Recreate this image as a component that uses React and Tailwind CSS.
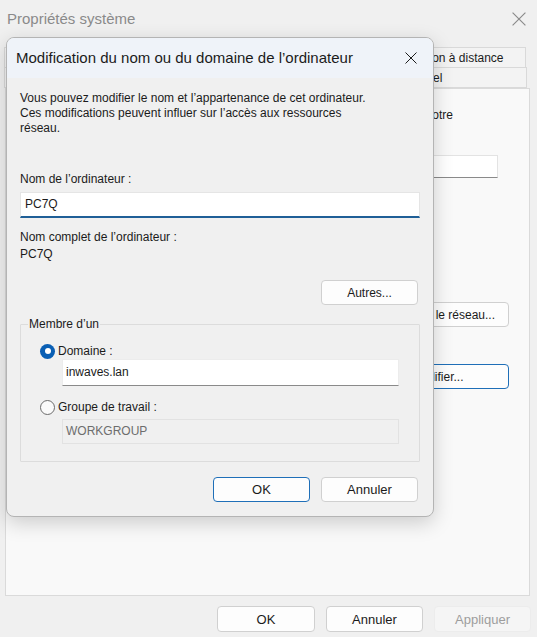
import React from 'react';
import clsx from 'clsx';

/* ─── helpers ─────────────────────────────────────────────── */
const UI = { fontFamily: '"Segoe UI", "Liberation Sans", Arial, sans-serif' };

const CloseGlyph = ({ size = 12, color = '#1b1b1b' }) => (
  <svg width={size} height={size} viewBox="0 0 12 12" fill="none">
    <path d="M0.5 0.5 L11.5 11.5 M11.5 0.5 L0.5 11.5" stroke={color} strokeWidth="1" />
  </svg>
);

const Button = ({ children, primary, disabled, className }) => (
  <div
    className={clsx(
      'flex items-center justify-center rounded-[4px] border text-[12px] leading-none whitespace-nowrap',
      primary && 'border-[#1f6fb8] bg-[#fdfdfd] text-[#1b1b1b]',
      !primary && !disabled && 'border-[#d0d0d0] bg-[#fdfdfd] text-[#1b1b1b]',
      disabled && 'border-[#ececec] bg-[#f5f5f5] text-[#9d9d9d]',
      className
    )}
  >
    {children}
  </div>
);

const Radio = ({ checked }) =>
  checked ? (
    <div className="w-[15px] h-[15px] rounded-full bg-[#0a5fb4] flex items-center justify-center">
      <div className="w-[6px] h-[6px] rounded-full bg-white" />
    </div>
  ) : (
    <div className="w-[15px] h-[15px] rounded-full border border-[#6b6b6b] bg-[#fafafa]" />
  );

/* ─── background window ───────────────────────────────────── */
// tabs on the left sit fully under the dialog, so they carry no label
const Tab = ({ label, className }) => (
  <div
    className={clsx(
      'h-full flex items-center justify-center border border-[#d9d9d9] -ml-px bg-[#f3f3f3] text-[12px] text-[#1b1b1b] whitespace-nowrap overflow-hidden',
      className
    )}
  >
    {label}
  </div>
);

const BackgroundWindow = () => (
  <div className="w-[537px] h-[637px] bg-[#f0f0f0] flex flex-col">
    {/* Title bar */}
    <div className="h-[38px] flex items-center justify-between pl-[7px] pr-[11px]">
      <span className="text-[15px] text-[#8a8a8a]">Propriétés système</span>
      <CloseGlyph size={14} color="#8a8a8a" />
    </div>

    {/* Tabs */}
    <div className="mt-[9px] ml-[5px] w-[524px] flex flex-col">
      <div className="h-[21px] flex">
        <Tab className="w-[190px]" />
        <Tab className="w-[179px]" />
        <Tab label="Utilisation à distance" className="w-[155px]" />
      </div>
      <div className="h-[21px] flex -mt-px">
        <Tab className="w-[312px]" />
        <Tab label="Matériel" className="w-[212px]" />
      </div>
    </div>

    {/* Panel */}
    <div className="ml-[5px] w-[525px] h-[508px] bg-[#f9f9f9] border border-[#dadada] flex flex-col text-[12px] text-[#1b1b1b] leading-[15px]">
      <div className="pt-[19px] w-[447px] text-right whitespace-nowrap">
        identifier votre
      </div>

      <div className="mt-[32px] flex justify-end pr-[31px]">
        <div className="w-[230px] h-[23px] bg-white border border-[#e3e3e3] border-b-[#8a8a8a]" />
      </div>

      <div className="mt-[124px] flex justify-end pr-[20px]">
        <Button className="w-[150px] h-[25px]">Identité sur le réseau...</Button>
      </div>

      <div className="mt-[37px] flex justify-end pr-[20px]">
        <Button primary className="w-[143px] h-[25px]">Modifier...</Button>
      </div>
    </div>

    {/* Bottom buttons */}
    <div className="mt-[10px] flex justify-end gap-[11px] pr-[6px]">
      <Button className="w-[98px] h-[26px] text-[13px]">OK</Button>
      <Button className="w-[97px] h-[26px] text-[13px]">Annuler</Button>
      <Button disabled className="w-[97px] h-[26px] text-[13px]">Appliquer</Button>
    </div>
  </div>
);

/* ─── dialog ──────────────────────────────────────────────── */
const Dialog = () => (
  <div className="absolute left-[6px] top-[37px] w-[428px] h-[480px] rounded-[8px] border border-[#b4b4b4] bg-[#f0f0f0] shadow-[0_6px_20px_rgba(0,0,0,0.18)] overflow-hidden flex flex-col">
    {/* Title bar */}
    <div className="h-[40px] bg-[#eff3f9] flex items-center justify-between pl-[9px] pr-[16px]">
      <span className="text-[15px] text-[#1b1b1b] whitespace-nowrap">
        Modification du nom ou du domaine de l’ordinateur
      </span>
      <CloseGlyph size={12} />
    </div>

    {/* Body */}
    <div className="px-[13px] flex flex-col text-[12px] text-[#1b1b1b] leading-[15px]">
      <p className="mt-[13px] whitespace-nowrap">
        Vous pouvez modifier le nom et l’appartenance de cet ordinateur.
        <br />
        Ces modifications peuvent influer sur l’accès aux ressources
        <br />
        réseau.
      </p>

      <div className="mt-[36px]">Nom de l’ordinateur :</div>
      <div className="mt-[5px] w-[400px] h-[26px] bg-white border border-[#e5e5e5] border-b-2 border-b-[#1f5f97] flex items-center pl-[4px]">
        PC7Q
      </div>

      <div className="mt-[12px]">Nom complet de l’ordinateur :</div>
      <div className="mt-[2px]">PC7Q</div>

      <div className="mt-[18px] flex justify-end pr-[2px]">
        <Button className="w-[97px] h-[25px]">Autres...</Button>
      </div>

      {/* Group box */}
      <fieldset className="mt-[12px] w-[400px] h-[145px] border border-[#dcdcdc] rounded-[1px] px-0 flex flex-col">
        <legend className="ml-[7px] px-[1px] leading-[15px]">Membre d’un</legend>

        <div className="mt-[11px] ml-[19px] flex items-center gap-[3px] h-[16px]">
          <Radio checked />
          <span>Domaine :</span>
        </div>
        <div className="mt-0 ml-[41px] w-[337px] h-[27px] bg-white border border-[#ececec] border-b-[#8a8a8a] flex items-center pl-[3px]">
          inwaves.lan
        </div>

        <div className="mt-[13px] ml-[19px] flex items-center gap-[3px] h-[16px]">
          <Radio />
          <span>Groupe de travail :</span>
        </div>
        <div className="mt-[4px] ml-[41px] w-[337px] h-[25px] bg-[#f0f0f0] border border-[#e2e2e2] flex items-center pl-[3px] text-[#6d6d6d]">
          WORKGROUP
        </div>
      </fieldset>

      <div className="mt-[15px] flex justify-end gap-[11px] pr-[2px]">
        <Button primary className="w-[97px] h-[25px] text-[13px]">OK</Button>
        <Button className="w-[97px] h-[25px] text-[13px]">Annuler</Button>
      </div>
    </div>
  </div>
);

/* ─── main page ───────────────────────────────────────────── */
export default function App() {
  return (
    <div className="relative w-[537px] h-[637px] overflow-hidden" style={UI}>
      <BackgroundWindow />
      <Dialog />
    </div>
  );
}
